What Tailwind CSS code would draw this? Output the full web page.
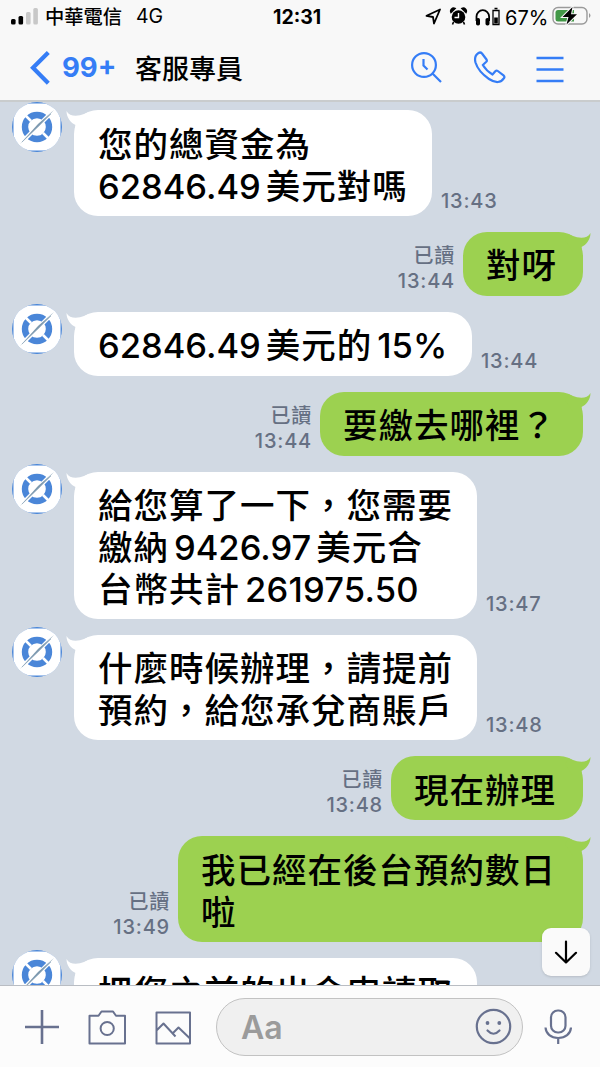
<!DOCTYPE html>
<html lang="zh-Hant">
<head>
    <meta charset="UTF-8">
    <meta name="viewport" content="width=device-width, initial-scale=1.0">
    <title>客服專員</title>
    <script src="https://cdn.jsdelivr.net/npm/@tailwindcss/browser@4"></script>
</head>
<body class="h-[1067px] w-[600px] overflow-hidden bg-[#d1d9e3] font-['Inter','Noto_Sans_CJK_TC',sans-serif] text-black">
    <svg class="hidden">
        <symbol id="avatar" viewBox="0 0 50 50">
            <rect width="50" height="50" fill="#4a86d8"/>
            <rect x="1.500" y="1.500" width="47" height="47" rx="15" fill="#fff"/>
            <path d="M0 0H16L0 16ZM50 0H34L50 16ZM0 50H16L0 34ZM50 50H34L50 34Z" fill="#fff"/>
            <circle cx="25" cy="25" r="12" fill="none" stroke="#4a86d8" stroke-width="6.4"/>
            <path d="M13 13l6 6M31 31l6 6" stroke="#fff" stroke-width="2.6"/>
            <path d="M8 42L42 8" stroke="#fff" stroke-width="4"/>
            <path d="M8 42L26 22 42 8 27 24Z" fill="#7b98ae"/>
            <path d="M10 40L39 12" stroke="#8ba5ba" stroke-width=".7"/>
        </symbol>
        <symbol id="tail" viewBox="0 0 30 20">
            <path d="M.5 1C3 5.500 8 6.500 14 5.300Q18 4.300 22 2.300L26 8 18 20H9L9.500 15C5 13 .5 7.500 .5 1Z"/>
        </symbol>
    </svg>

    <div class="flex h-full flex-col">
        <header class="flex h-[102px] shrink-0 flex-col border-b-2 border-[#c9cccd] bg-[#f8f8f8]">
            <!-- status bar -->
            <div class="flex h-[34px] items-center pl-[10px]">
                <svg class="-mt-[2px] h-[18px] w-[28px]" viewBox="0 0 28 18">
                    <rect x="1" y="12" width="4.600" height="5.500" rx="1.500"/>
                    <rect x="8.500" y="9" width="4.600" height="8.500" rx="1.500"/>
                    <rect x="16" y="5" width="4.600" height="12.500" rx="1.500" fill="#c8c8c8"/>
                    <rect x="23.300" y="1" width="4.600" height="16.500" rx="1.500" fill="#c8c8c8"/>
                </svg>
                <span class="mt-[2px] ml-[7px] w-[91px] text-[19.300px] leading-none font-medium whitespace-nowrap">中華電信</span>
                <span class="w-[137px] text-[19.500px] leading-none">4G</span>
                <span class="mt-px w-[152px] text-[19.500px] leading-none font-bold">12:31</span>
                <svg class="h-[20px] w-[76px]" viewBox="0 0 76 20">
                    <path d="M1.500 8.800L15 2.500 9 16.500 8 10Z" fill="none" stroke="#000" stroke-width="1.800" stroke-linejoin="round"/>
                    <circle cx="33.500" cy="10" r="6.800"/>
                    <path d="M26 5.500a3 3 0 0 1 4-4ZM41 5.500a3 3 0 0 0-4-4ZM28.500 15l-1 2.500M38.500 15l1 2.500" stroke="#000" stroke-width="1.600"/>
                    <path d="M33.500 6v4.500h-4" fill="none" stroke="#fff" stroke-width="1.400"/>
                    <path d="M51.500 14V9.500a6.300 6.300 0 0 1 12.600 0V14" fill="none" stroke="#000" stroke-width="1.800"/>
                    <rect x="51" y="11" width="4" height="7.500" rx="1.800"/>
                    <rect x="60.500" y="11" width="4" height="7.500" rx="1.800"/>
                    <path d="M68 3.500h6v14h-6ZM69.500 1.500h3" fill="none" stroke="#000" stroke-width="1.300"/>
                    <rect x="69.200" y="10.500" width="3.600" height="6"/>
                </svg>
                <span class="mt-px ml-[4px] w-[45px] text-[20px] leading-none whitespace-nowrap">67%</span>
                <svg class="-mt-[2px] ml-[2px] h-[20px] w-[40px] shrink-0" viewBox="0 0 40 20">
                    <rect x="1" y="1.500" width="34" height="16.500" rx="5" fill="none" stroke="#9a9a9a" stroke-width="1.400"/>
                    <path d="M6 4H22V15.500H6Q3.500 15.500 3.500 13V6.500Q3.500 4 6 4Z" fill="#429847"/>
                    <path d="M37 7q3 2.500 0 5Z" fill="#9a9a9a"/>
                    <path d="M20.500 1L10.500 11H16.500L14.500 18.500 25 8.300H19Z" stroke="#f8f8f8" stroke-width="2" paint-order="stroke"/>
                </svg>
            </div>
            <!-- title bar -->
            <div class="flex h-[66px] items-center pt-px pl-[30px] text-[#357df6]">
                <svg class="h-[34px] w-[20px]" viewBox="0 0 20 34" fill="none" stroke="currentColor" stroke-width="4.200"><path d="M18.300 1.500L3 16.800 18.300 32.200"/></svg>
                <span class="mt-px ml-[12px] w-[73px] text-[27.500px] leading-none font-bold">99+</span>
                <h1 class="mt-[3px] w-[275px] text-[27px] leading-none font-medium text-black">客服專員</h1>
                <svg class="h-[34px] w-[34px]" viewBox="0 0 34 34" fill="none" stroke="currentColor" stroke-width="2.200">
                    <circle cx="14" cy="14" r="11.900"/><path d="M22.500 22.500L31 31M13.500 8v6.500l4 4"/>
                </svg>
                <svg class="ml-[29px] h-[34px] w-[34px]" viewBox="0 0 34 34" fill="none" stroke="currentColor" stroke-width="2.200" stroke-linejoin="round">
                    <path d="M5.500 2Q7.500 .8 9 2.500L13.500 8.500Q14.300 9.800 13.300 10.800L9.800 14Q13.500 20 19.500 23.500L22.300 20.200Q23.500 19 24.800 20L30.500 24.300Q32 25.600 31 27.200C28 32 22.500 32.300 16 28C9.500 23.500 4.500 18 2.500 11.500Q.8 5 5.500 2Z"/>
                </svg>
                <svg class="ml-[29px] h-[34px] w-[28px]" viewBox="0 0 28 34" stroke="currentColor" stroke-width="2.400"><path d="M.5 7h27M.5 18.500h27M.5 30h27"/></svg>
            </div>
        </header>

        <!-- messages -->
        <main class="relative flex min-h-0 flex-1 flex-col gap-4 overflow-hidden pt-[8.300px] text-[34.500px] leading-[41.700px] font-medium tracking-[1px] whitespace-nowrap">
            <div class="flex shrink-0 items-end pl-3">
                <svg class="-mt-2 h-[50px] w-[50px] self-start rounded-full"><use href="#avatar"/></svg>
                <div class="relative ml-3 w-[358px] rounded-[24px] bg-white pt-[13.600px] pb-[8.600px] pl-6">
                    <svg class="absolute -left-2 top-0 h-5 w-[30px] fill-white"><use href="#tail"/></svg>
                    您的總資金為<br><span class="mr-[5px] tracking-[0px]">62846.49</span>美元對嗎
                </div>
                <time class="mb-[2px] ml-[9px] text-[20px] leading-[25px] tracking-[0.800px] text-[#667083]">13:43</time>
            </div>
            <div class="flex shrink-0 items-end justify-end pr-[17px]">
                <div class="mr-[8px] mb-[2px] text-right text-[20px] leading-[25px] tracking-[0.800px] text-[#667083]">已讀<br>13:44</div>
                <div class="relative w-[120px] rounded-[24px] bg-[#9cd150] pt-[13.600px] pb-[8.600px] pl-[23px]">
                    <svg class="absolute -right-2 top-0 h-5 w-[30px] -scale-x-100 fill-[#9cd150]"><use href="#tail"/></svg>
                    對呀
                </div>
            </div>
            <div class="flex shrink-0 items-end pl-3">
                <svg class="-mt-2 h-[50px] w-[50px] self-start rounded-full"><use href="#avatar"/></svg>
                <div class="relative ml-3 w-[398px] rounded-[24px] bg-white pt-[13.600px] pb-[8.600px] pl-6">
                    <svg class="absolute -left-2 top-0 h-5 w-[30px] fill-white"><use href="#tail"/></svg>
                    <span class="mr-[5px] tracking-[0px]">62846.49</span>美元的<span class="ml-[5px] tracking-[0px]">15%</span>
                </div>
                <time class="mb-[2px] ml-[9px] text-[20px] leading-[25px] tracking-[0.800px] text-[#667083]">13:44</time>
            </div>
            <div class="flex shrink-0 items-end justify-end pr-[17px]">
                <div class="mr-[8px] mb-[2px] text-right text-[20px] leading-[25px] tracking-[0.800px] text-[#667083]">已讀<br>13:44</div>
                <div class="relative w-[263px] rounded-[24px] bg-[#9cd150] pt-[13.600px] pb-[8.600px] pl-[23px]">
                    <svg class="absolute -right-2 top-0 h-5 w-[30px] -scale-x-100 fill-[#9cd150]"><use href="#tail"/></svg>
                    要繳去哪裡？
                </div>
            </div>
            <div class="flex shrink-0 items-end pl-3">
                <svg class="-mt-2 h-[50px] w-[50px] self-start rounded-full"><use href="#avatar"/></svg>
                <div class="relative ml-3 w-[403px] rounded-[24px] bg-white pt-[13.600px] pb-[8.600px] pl-6">
                    <svg class="absolute -left-2 top-0 h-5 w-[30px] fill-white"><use href="#tail"/></svg>
                    給您算了一下，您需要<br>繳納<span class="mx-[5px] tracking-[0px]">9426.97</span>美元合<br>台幣共計<span class="ml-[5px] tracking-[0.200px]">261975.50</span>
                </div>
                <time class="mb-[2px] ml-[9px] text-[20px] leading-[25px] tracking-[0.800px] text-[#667083]">13:47</time>
            </div>
            <div class="flex shrink-0 items-end pl-3">
                <svg class="-mt-2 h-[50px] w-[50px] self-start rounded-full"><use href="#avatar"/></svg>
                <div class="relative ml-3 w-[403px] rounded-[24px] bg-white pt-[13.600px] pb-[8.600px] pl-6">
                    <svg class="absolute -left-2 top-0 h-5 w-[30px] fill-white"><use href="#tail"/></svg>
                    什麼時候辦理，請提前<br>預約，給您承兌商賬戶
                </div>
                <time class="mb-[2px] ml-[9px] text-[20px] leading-[25px] tracking-[0.800px] text-[#667083]">13:48</time>
            </div>
            <div class="flex shrink-0 items-end justify-end pr-[17px]">
                <div class="mr-[8px] mb-[2px] text-right text-[20px] leading-[25px] tracking-[0.800px] text-[#667083]">已讀<br>13:48</div>
                <div class="relative w-[192px] rounded-[24px] bg-[#9cd150] pt-[13.600px] pb-[8.600px] pl-[23px]">
                    <svg class="absolute -right-2 top-0 h-5 w-[30px] -scale-x-100 fill-[#9cd150]"><use href="#tail"/></svg>
                    現在辦理
                </div>
            </div>
            <div class="flex shrink-0 items-end justify-end pr-[17px]">
                <div class="mr-[8px] mb-[2px] text-right text-[20px] leading-[25px] tracking-[0.800px] text-[#667083]">已讀<br>13:49</div>
                <div class="relative w-[405px] rounded-[24px] bg-[#9cd150] pt-[13.600px] pb-[8.600px] pl-[23px]">
                    <svg class="absolute -right-2 top-0 h-5 w-[30px] -scale-x-100 fill-[#9cd150]"><use href="#tail"/></svg>
                    我已經在後台預約數日<br>啦
                </div>
            </div>
            <div class="flex shrink-0 items-end pl-3">
                <svg class="-mt-2 h-[50px] w-[50px] self-start rounded-full"><use href="#avatar"/></svg>
                <div class="relative ml-3 w-[403px] rounded-[24px] bg-white pt-[13.600px] pb-[8.600px] pl-6">
                    <svg class="absolute -left-2 top-0 h-5 w-[30px] fill-white"><use href="#tail"/></svg>
                    把您之前的出金申請取
                </div>
            </div>
            <button class="absolute right-[10px] bottom-[9px] flex h-12 w-12 items-center justify-center rounded-[9px] bg-[#fafafa] shadow">
                <svg class="h-6 w-6" viewBox="0 0 24 24" fill="none" stroke="#000" stroke-width="2.200" stroke-linecap="round" stroke-linejoin="round"><path d="M12 1.500v21M2 12.800l10 9.700 10-9.700"/></svg>
            </button>
        </main>

        <!-- input bar -->
        <footer class="flex h-[82px] shrink-0 items-center border-t border-[#b9bdc3] bg-[#fcfcfc] pl-[24px] text-[#68718f]">
            <svg class="h-[36px] w-[36px]" viewBox="0 0 36 36" stroke="currentColor" stroke-width="2.600"><path d="M18 1v34M1 18h34"/></svg>
            <svg class="ml-[28px] h-[36px] w-[38px]" viewBox="0 0 38 36" fill="none" stroke="currentColor" stroke-width="2" stroke-linejoin="round">
                <path d="M1.500 6.800H10.500L13.500 2.500H25L28 6.800H37V34.500H1.500Z"/><circle cx="19.200" cy="19.500" r="6.600"/>
            </svg>
            <svg class="ml-[28px] h-[36px] w-[38px]" viewBox="0 0 38 36" fill="none" stroke="currentColor" stroke-width="2" stroke-linejoin="round">
                <path d="M2.500 3.500H36V34.500H2.500ZM2.500 21.500L9.500 14.500 21.500 27.500M19 24L24.500 18.500 36 29.500"/>
            </svg>
            <div class="ml-[24px] flex h-[58px] w-[307px] items-center rounded-full border border-[#c2c2c2] bg-[#f0f0f0] pl-[24px]">
                <span class="mt-[2px] flex-1 text-[32px] leading-none font-semibold text-[#9b9b9b]">Aa</span>
                <svg class="mr-[10px] h-[37px] w-[37px]" viewBox="0 0 37 37" fill="none" stroke="currentColor" stroke-width="2.200" stroke-linecap="round">
                    <circle cx="18.500" cy="18.500" r="16.700"/>
                    <path d="M12.500 22.500q6 6.500 12 0"/>
                    <circle cx="12.500" cy="15" r="1.900" fill="currentColor" stroke="none"/><circle cx="24.300" cy="15" r="1.900" fill="currentColor" stroke="none"/>
                </svg>
            </div>
            <svg class="ml-[21px] h-[36px] w-[28px]" viewBox="0 0 28 36" fill="none" stroke="currentColor" stroke-width="2.200">
                <rect x="7" y="1.500" width="14.500" height="22" rx="6.800"/>
                <path d="M1.500 18.500C2 25 7 29 14.200 29S26.500 25 27 18.500M14.200 29V35"/>
            </svg>
        </footer>
    </div>
</body>
</html>
